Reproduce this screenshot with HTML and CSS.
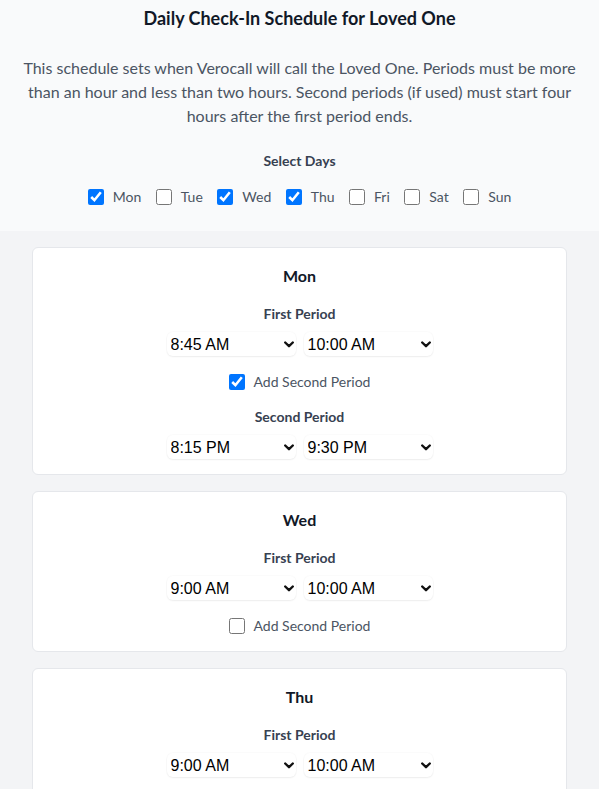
FILE: index.html
```html
<!DOCTYPE html>
<html lang="en">
<head>
<meta charset="utf-8">
<title>Daily Check-In Schedule</title>
<link rel="stylesheet" href="styles.css">
</head>
<body>
<header class="intro">
  <h2 class="intro-title">Daily Check-In Schedule for Loved One</h2>
  <p class="intro-text">This schedule sets when Verocall will call the Loved One. Periods must be more than an hour and less than two hours. Second periods (if used) must start four hours after the first period ends.</p>
  <div class="days-label">Select Days</div>
  <div class="days">
    <label class="day"><input type="checkbox" checked><span>Mon</span></label>
    <label class="day"><input type="checkbox"><span>Tue</span></label>
    <label class="day"><input type="checkbox" checked><span>Wed</span></label>
    <label class="day"><input type="checkbox" checked><span>Thu</span></label>
    <label class="day"><input type="checkbox"><span>Fri</span></label>
    <label class="day"><input type="checkbox"><span>Sat</span></label>
    <label class="day"><input type="checkbox"><span>Sun</span></label>
  </div>
</header>

<main class="cards">
  <section class="card">
    <h3 class="card-title">Mon</h3>
    <div class="period-label">First Period</div>
    <div class="selects">
      <span class="select-wrap"><select class="time"><option>8:45 AM</option></select><svg class="chev" viewBox="0 0 10 7"><polyline points="1.2,1.5 5,5.2 8.8,1.5"/></svg></span>
      <span class="select-wrap"><select class="time"><option>10:00 AM</option></select><svg class="chev" viewBox="0 0 10 7"><polyline points="1.2,1.5 5,5.2 8.8,1.5"/></svg></span>
    </div>
    <label class="second"><input type="checkbox" checked><span>Add Second Period</span></label>
    <div class="period-label period-label--second">Second Period</div>
    <div class="selects">
      <span class="select-wrap"><select class="time"><option>8:15 PM</option></select><svg class="chev" viewBox="0 0 10 7"><polyline points="1.2,1.5 5,5.2 8.8,1.5"/></svg></span>
      <span class="select-wrap"><select class="time"><option>9:30 PM</option></select><svg class="chev" viewBox="0 0 10 7"><polyline points="1.2,1.5 5,5.2 8.8,1.5"/></svg></span>
    </div>
  </section>

  <section class="card">
    <h3 class="card-title">Wed</h3>
    <div class="period-label">First Period</div>
    <div class="selects">
      <span class="select-wrap"><select class="time"><option>9:00 AM</option></select><svg class="chev" viewBox="0 0 10 7"><polyline points="1.2,1.5 5,5.2 8.8,1.5"/></svg></span>
      <span class="select-wrap"><select class="time"><option>10:00 AM</option></select><svg class="chev" viewBox="0 0 10 7"><polyline points="1.2,1.5 5,5.2 8.8,1.5"/></svg></span>
    </div>
    <label class="second"><input type="checkbox"><span>Add Second Period</span></label>
  </section>

  <section class="card">
    <h3 class="card-title">Thu</h3>
    <div class="period-label">First Period</div>
    <div class="selects">
      <span class="select-wrap"><select class="time"><option>9:00 AM</option></select><svg class="chev" viewBox="0 0 10 7"><polyline points="1.2,1.5 5,5.2 8.8,1.5"/></svg></span>
      <span class="select-wrap"><select class="time"><option>10:00 AM</option></select><svg class="chev" viewBox="0 0 10 7"><polyline points="1.2,1.5 5,5.2 8.8,1.5"/></svg></span>
    </div>
    <label class="second"><input type="checkbox"><span>Add Second Period</span></label>
  </section>
</main>
</body>
</html>
```

FILE: styles.css
```css
html, body {
  margin: 0;
  padding: 0;
}
body {
  background: #f3f4f6;
  font-family: Lato, "Noto Sans", sans-serif;
  color: #111827;
}

.intro {
  background: #f9fafb;
  padding: 4px 16px 22px;
  text-align: center;
}
.intro-title {
  margin: 0;
  font-size: 18px;
  line-height: 28px;
  font-weight: 700;
  color: #111827;
}
.intro-text {
  margin: 24px auto 0;
  font-size: 16px;
  line-height: 24px;
  color: #4b5563;
  max-width: 560px;
}
.days-label {
  margin-top: 23px;
  font-size: 14px;
  line-height: 20px;
  font-weight: 700;
  color: #374151;
}
.days {
  margin-top: 14px;
  height: 24px;
  display: flex;
  justify-content: center;
  align-items: center;
  gap: 14.5px;
}
.day, .second {
  display: inline-flex;
  align-items: center;
  gap: 9px;
  font-size: 14px;
  line-height: 20px;
  color: #4b5563;
}
input[type="checkbox"] {
  width: 16px;
  height: 16px;
  margin: 0;
  accent-color: #0075ff;
}

.cards {
  padding: 16px 32px 16px;
  display: flex;
  flex-direction: column;
  gap: 16px;
}
.card {
  background: #ffffff;
  border: 1px solid #e5e7eb;
  border-radius: 6px;
  padding: 16px 16px 15px;
  display: flex;
  flex-direction: column;
  align-items: center;
}
.card-title {
  margin: 0 0 16px;
  font-size: 16px;
  line-height: 24px;
  font-weight: 700;
  color: #111827;
}
.period-label {
  font-size: 14px;
  line-height: 20px;
  font-weight: 700;
  color: #374151;
  margin-bottom: 8px;
}
.period-label--second {
  margin-top: 15px;
}
.selects {
  display: flex;
  justify-content: center;
  gap: 8px;
}
.select-wrap {
  position: relative;
  display: block;
  width: 129px;
  height: 24px;
}
.time {
  appearance: none;
  -webkit-appearance: none;
  width: 100%;
  height: 24px;
  margin: 0;
  border: none;
  border-radius: 6px;
  background: #ffffff;
  box-shadow: 0 0 0 1px rgba(0, 0, 0, 0.015), 0 1px 2px rgba(0, 0, 0, 0.06);
  padding: 0 20px 0 4px;
  font-family: "Liberation Sans", Arial, sans-serif;
  font-size: 16px;
  color: #000000;
}
.chev {
  position: absolute;
  right: 2px;
  top: 9px;
  width: 10px;
  height: 7px;
  pointer-events: none;
  fill: none;
  stroke: #111111;
  stroke-width: 2.4;
  stroke-linecap: round;
  stroke-linejoin: round;
}
.second {
  margin-top: 15px;
  height: 21px;
}
```
